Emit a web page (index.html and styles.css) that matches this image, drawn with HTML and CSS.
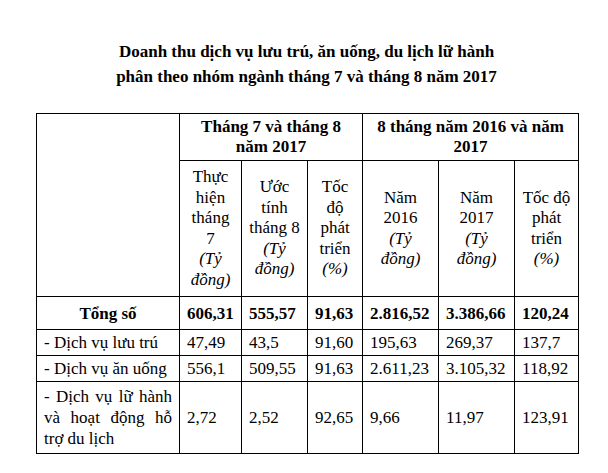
FILE: index.html
```html
<!DOCTYPE html>
<html lang="vi">
<head>
<meta charset="utf-8">
<title>Doanh thu dịch vụ</title>
<link rel="stylesheet" href="styles.css">
</head>
<body>
<div class="page">
  <h1 class="title">Doanh thu dịch vụ lưu trú, ăn uống, du lịch lữ hành<br>phân theo nhóm ngành tháng 7 và tháng 8 năm 2017</h1>
  <table class="data">
    <colgroup>
      <col class="c-name"><col class="c-a"><col class="c-b"><col class="c-c"><col class="c-d"><col class="c-e"><col class="c-f">
    </colgroup>
    <tr class="r-group">
      <td rowspan="2"></td>
      <td colspan="3" class="group">Tháng 7 và tháng 8 năm 2017</td>
      <td colspan="3" class="group">8 tháng năm 2016 và năm 2017</td>
    </tr>
    <tr class="r-head">
      <td class="head">Thực hiện tháng 7<span class="unit">(Tỷ đồng)</span></td>
      <td class="head">Ước tính tháng 8<span class="unit">(Tỷ đồng)</span></td>
      <td class="head">Tốc độ phát triển<span class="unit">(%)</span></td>
      <td class="head">Năm 2016<span class="unit">(Tỷ đồng)</span></td>
      <td class="head">Năm 2017<span class="unit">(Tỷ đồng)</span></td>
      <td class="head">Tốc độ phát triển<span class="unit">(%)</span></td>
    </tr>
    <tr class="r-total">
      <td class="total-label">Tổng số</td>
      <td class="num b">606,31</td>
      <td class="num b">555,57</td>
      <td class="num b">91,63</td>
      <td class="num b">2.816,52</td>
      <td class="num b">3.386,66</td>
      <td class="num b">120,24</td>
    </tr>
    <tr class="r-row">
      <td>- Dịch vụ lưu trú</td>
      <td>47,49</td><td>43,5</td><td>91,60</td><td>195,63</td><td>269,37</td><td>137,7</td>
    </tr>
    <tr class="r-row">
      <td>- Dịch vụ ăn uống</td>
      <td>556,1</td><td>509,55</td><td>91,63</td><td>2.611,23</td><td>3.105,32</td><td>118,92</td>
    </tr>
    <tr class="r-tall">
      <td class="just">- Dịch vụ lữ hành và hoạt động hỗ trợ du lịch</td>
      <td>2,72</td><td>2,52</td><td>92,65</td><td>9,66</td><td>11,97</td><td>123,91</td>
    </tr>
  </table>
</div>
</body>
</html>
```

FILE: styles.css
```css
html, body {
  margin: 0;
  padding: 0;
  background: #fff;
}
body {
  font-family: "Liberation Serif", "Times New Roman", serif;
  color: #000;
}
.page {
  width: 541px;
  margin-left: 36px;
  padding-top: 39px;
}
.title {
  margin: 0 0 24px 0;
  font-size: 17px;
  line-height: 25px;
  font-weight: bold;
  text-align: center;
}
.data {
  border-collapse: collapse;
  table-layout: fixed;
  width: 542px;
}
.c-name { width: 143px; }
.c-a { width: 62px; }
.c-b { width: 66px; }
.c-c { width: 55px; }
.c-d { width: 76px; }
.c-e { width: 76px; }
.c-f { width: 64px; }
.data td {
  border: 1px solid #000;
  padding: 0 7px;
  font-size: 17px;
  line-height: 21px;
  vertical-align: middle;
  text-align: left;
}
.data td.group {
  font-weight: bold;
  text-align: center;
  line-height: 20px;
}
.data td.head {
  text-align: center;
  line-height: 20.5px;
}
.unit {
  display: block;
  font-style: italic;
}
.data td.total-label {
  font-weight: bold;
  text-align: center;
}
.b { font-weight: bold; }
.data td.just {
  text-align: justify;
}
.r-group { height: 47px; }
.r-head { height: 136px; }
.r-total { height: 33px; }
.r-row { height: 26px; }
.r-tall { height: 72px; }
```
